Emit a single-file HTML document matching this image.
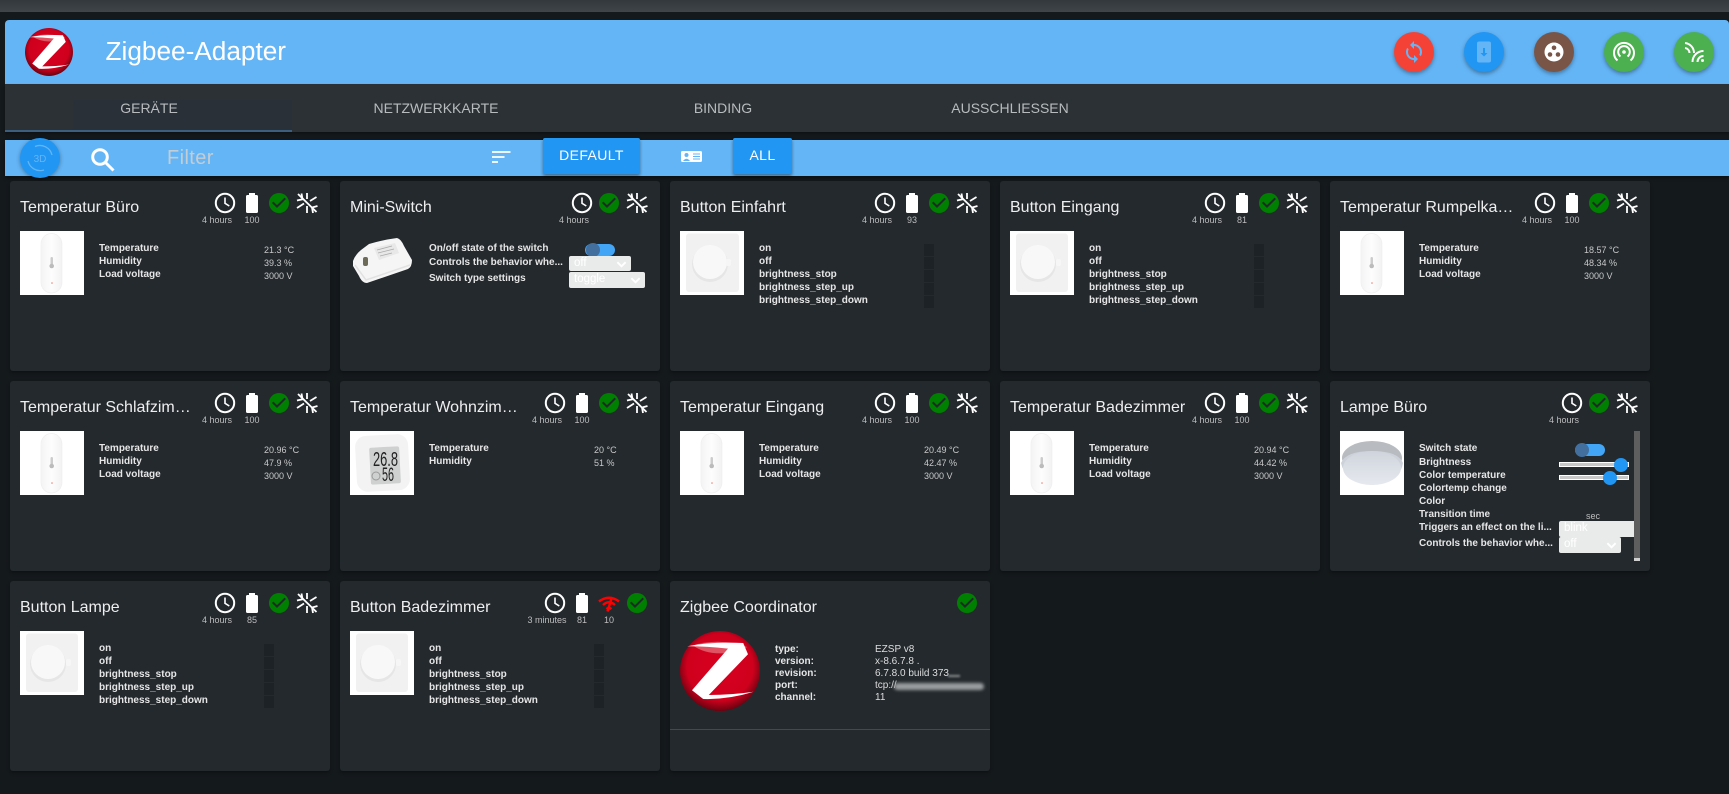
<!DOCTYPE html>
<html lang="de"><head><meta charset="utf-8"><title>Zigbee-Adapter</title>
<style>
html,body{margin:0;padding:0;width:1729px;height:794px;overflow:hidden;background:#14191c;font-family:"Liberation Sans",sans-serif;color:#fff}
*{box-sizing:border-box}
.a{position:absolute}
#top{position:absolute;left:0;top:0;width:1729px;height:12px;background:linear-gradient(#33383c,#40454a)}
#hdr{position:absolute;left:5px;top:20px;width:1724px;height:64px;background:#64b5f6;border-radius:4px 4px 0 0}
#ttl{position:absolute;left:105.5px;top:36px;font-size:26.2px;line-height:30px;color:#fff;white-space:nowrap}
#tabs{position:absolute;left:5px;top:84px;width:1724px;height:48px;background:#2b3135;box-shadow:0 2px 3px rgba(0,0,0,.3)}
.tab{position:absolute;top:100px;font-size:14px;line-height:16px;color:#b8bcbe;transform:translateX(-50%);white-space:nowrap}
#tb{position:absolute;left:5px;top:140px;width:1724px;height:36px;background:#64b5f6;box-shadow:0 2px 3px rgba(0,0,0,.4)}
.rb{position:absolute;top:32px;width:40px;height:40px;border-radius:50%;box-shadow:0 2px 4px rgba(0,0,0,.35)}
.rb svg{position:absolute;left:8px;top:8px;width:24px;height:24px}
.btn{position:absolute;top:138px;height:36px;background:#2196f3;border-radius:2px;font-size:14px;letter-spacing:.4px;line-height:35px;text-align:center;color:#fff;box-shadow:0 2px 3px rgba(0,0,0,.4)}
.c{position:absolute;width:320px;height:190px;background:#23292d;border-radius:3px;box-shadow:0 2px 3px rgba(0,0,0,.3)}
.t{position:absolute;left:10px;top:17px;font-size:16px;line-height:20px;color:#eee;white-space:nowrap}
.im{position:absolute;left:10px;top:50px;width:64px;height:64px}
.l{position:absolute;left:89px;margin-top:1px;font-size:10px;font-weight:bold;line-height:13px;color:#e6e6e6;white-space:nowrap}
.v{position:absolute;left:254px;font-size:9px;line-height:13px;color:#c8c8c8;white-space:nowrap}
.s{position:absolute;font-size:9px;line-height:11px;color:#bdbdbd;transform:translateX(-50%);top:34px;white-space:nowrap}
.ic{position:absolute;top:10px;width:24px;height:24px}
.ck{left:257px}.sn{left:285px}.bt{left:230px}.cl{left:202.7px}.cl2{left:230px}
.d{position:absolute;left:254px;width:10px;height:12px;background:#1c2225}
.sel{position:absolute;background:#e9ebea;border-radius:2px;font-size:11.5px;color:#fff;padding-left:5px;line-height:15px}
.sel svg{position:absolute;top:3px;width:11px;height:11px}
.tr{position:absolute;width:30px;height:12px;border-radius:6px;background:#42a5f5}
.th{position:absolute;left:0;top:-1px;width:14px;height:14px;border-radius:50%;background:#436f9e}
.cv{position:absolute;left:205px;font-size:10px;line-height:12px;color:#ddd;white-space:nowrap}
.cl3{left:105px;line-height:12px}
</style></head><body>
<svg width="0" height="0" style="position:absolute">
<defs>
<radialGradient id="rg" cx="50%" cy="45%" r="55%"><stop offset="0" stop-color="#d8001f"/><stop offset=".75" stop-color="#cf001d"/><stop offset="1" stop-color="#6b0210"/></radialGradient>
<linearGradient id="pl" x1="0" x2="1"><stop offset="0" stop-color="#f4f4f4"/><stop offset=".5" stop-color="#fdfdfd"/><stop offset="1" stop-color="#f2f2f2"/></linearGradient>
<linearGradient id="lg" x1="0" x2="0" y1="0" y2="1"><stop offset="0" stop-color="#cfd4dc"/><stop offset="1" stop-color="#e6e9ef"/></linearGradient>
<symbol id="zb" viewBox="0 0 100 100"><circle cx="50" cy="50" r="50" fill="url(#rg)"/><path d="M16 18Q50 8 84 20Q70 28 50 28Q30 28 16 18Z" fill="#e88a90" opacity=".6"/><path d="M9 19Q40 13 79 15L85 29L36 80Q65 80 92 76Q60 86 29 85L15 74L60 22Q35 19 9 19Z" fill="#fff"/></symbol>
<symbol id="clk" viewBox="0 0 24 24"><circle cx="12" cy="12" r="9.200" fill="none" stroke="#fff" stroke-width="2"/><path d="M12 6.500V12.300L16.300 15" fill="none" stroke="#fff" stroke-width="1.600"/></symbol>
<symbol id="bat" viewBox="0 0 24 24"><path fill="#fff" d="M16.67 4H15V2H9v2H7.33C6.6 4 6 4.6 6 5.33v15.33C6 21.4 6.6 22 7.33 22h9.33c.74 0 1.34-.6 1.34-1.33V5.33C18 4.6 17.4 4 16.67 4z"/></symbol>
<symbol id="chk" viewBox="0 0 24 24"><circle cx="12" cy="12" r="10" fill="#008000"/><path fill="#1f2a28" d="M10 17l-5-5 1.41-1.41L10 14.17l7.59-7.59L19 8z"/></symbol>
<symbol id="sno" viewBox="0 0 24 24"><g fill="none" stroke="#fff" stroke-width="1.800"><path d="M3 3L21.500 21"/><path d="M2 9.500L7.500 8.300L6.500 2.500"/><path d="M12 2V8"/><path d="M15 10L21.500 6"/><path d="M22.500 15L17 16.500L18 22"/><path d="M2 17L9 12.500"/><path d="M12 15V22"/></g></symbol>
<symbol id="sen" viewBox="0 0 64 64"><rect width="64" height="64" fill="#fff"/><rect x="21" y="2.500" width="21" height="59.500" rx="10.500" fill="url(#pl)" stroke="#efefef" stroke-width=".7"/><rect x="30.500" y="26" width="2.500" height="8" rx="1.200" fill="#ccc"/><circle cx="31.700" cy="35" r="2.300" fill="#bbb"/><circle cx="32" cy="52" r=".8" fill="#f08070"/></symbol>
<symbol id="btn1" viewBox="0 0 64 64"><rect width="64" height="64" fill="#fff"/><rect x="6" y="2.500" width="53" height="58.500" rx="3" fill="#f1f1f1"/><circle cx="30" cy="33" r="18" fill="#e6e6e6"/><circle cx="30" cy="31" r="17" fill="#f8f8f8"/><rect x="46" y="28" width="5" height="7" rx="2" fill="#f6f6f6"/></symbol>
<symbol id="btn2" viewBox="0 0 64 64"><rect width="64" height="64" fill="#fff"/><rect x="6" y="2.500" width="52" height="58.500" rx="3" fill="#f1f1f1"/><circle cx="28" cy="33" r="18" fill="#e6e6e6"/><circle cx="28" cy="31" r="17" fill="#f8f8f8"/><rect x="46" y="28" width="5" height="7" rx="2" fill="#f6f6f6"/></symbol>
<symbol id="lmp" viewBox="0 0 64 64"><rect width="64" height="64" fill="#fff"/><ellipse cx="32" cy="27" rx="30" ry="17" fill="#b8bbbf"/><path d="M1 32Q5 51 32 54Q60 51 63 32Q58 20 32 20Q6 20 1 32Z" fill="#cdd2da"/><ellipse cx="32" cy="37" rx="29" ry="17" fill="url(#lg)"/></symbol>
<symbol id="chv" viewBox="0 0 12 12"><path d="M1.500 3.500L6 8L10.500 3.500" fill="none" stroke="#fff" stroke-width="2"/></symbol>
</defs></svg>

<div id="top"></div>
<div id="hdr"></div>
<svg class="a" style="left:25px;top:28px" width="48" height="48"><use href="#zb"/></svg>
<div id="ttl">Zigbee-Adapter</div>
<div class="rb" style="left:1394px;background:#f44336"><svg viewBox="0 0 24 24"><path fill="#64b5f6" d="M12 4V1L8 5l4 4V6c3.31 0 6 2.69 6 6 0 1.01-.25 1.97-.7 2.8l1.46 1.46C19.54 15.03 20 13.57 20 12c0-4.42-3.58-8-8-8zm0 14c-3.31 0-6-2.69-6-6 0-1.01.25-1.97.7-2.8L5.24 7.74C4.46 8.97 4 10.43 4 12c0 4.42 3.58 8 8 8v3l4-4-4-4v3z"/></svg></div>
<div class="rb" style="left:1464px;background:#2196f3"><svg viewBox="0 0 24 24"><rect x="5" y="1.500" width="14" height="21" rx="2" fill="#64b5f6"/><path fill="#2196f3" d="M11 8h2v5h2.500L12 16.500 8.500 13H11z"/></svg></div>
<div class="rb" style="left:1534px;background:#795548"><svg viewBox="0 0 24 24"><circle cx="12" cy="12" r="9.500" fill="#fff"/><circle cx="12" cy="7.800" r="2.300" fill="#795548"/><circle cx="8" cy="14.500" r="2.300" fill="#795548"/><circle cx="16" cy="14.500" r="2.300" fill="#795548"/></svg></div>
<div class="rb" style="left:1604px;background:#4caf50"><svg viewBox="0 0 24 24"><g fill="none" stroke="#fff" stroke-width="2"><path d="M5.500 20.500A10 10 0 1 1 18.500 20.500"/><path d="M8.500 16.500A5.800 5.800 0 1 1 15.500 16.500"/></g><circle cx="12" cy="12" r="1.800" fill="#fff"/></svg></div>
<div class="rb" style="left:1674px;background:#4caf50"><svg viewBox="0 0 24 24"><g fill="none" stroke="#fff" stroke-width="2"><path d="M3 3A10 10 0 0 1 12 13"/><path d="M3 8A5 5 0 0 1 7.500 13"/><path d="M10.500 22A11 11 0 0 1 21.500 11"/><path d="M15.500 22A6 6 0 0 1 21.500 16"/></g><circle cx="20.500" cy="20.500" r="1.500" fill="#fff"/></svg></div>

<div id="tabs"></div>
<div class="a" style="left:73px;top:100px;width:219px;height:30px;background:#2a3038"></div>
<div class="a" style="left:5px;top:130px;width:287px;height:2px;background:#3c5f80"></div>
<div class="tab" style="left:149px">GERÄTE</div>
<div class="tab" style="left:436px">NETZWERKKARTE</div>
<div class="tab" style="left:723px">BINDING</div>
<div class="tab" style="left:1010px">AUSSCHLIESSEN</div>

<div id="tb"></div>
<svg class="a" style="left:20px;top:138px;filter:drop-shadow(0 1px 2px rgba(0,0,0,.35))" width="40" height="40" viewBox="0 0 40 40"><circle cx="20" cy="20" r="20" fill="#2196f3"/><g fill="none" stroke="#64b5f6" stroke-width="1.300"><path d="M15 8.500A12.500 12.500 0 0 1 32 17"/><path d="M8 23A12.500 12.500 0 0 0 24 32"/></g><text x="20" y="24" font-size="10" fill="#64b5f6" text-anchor="middle" font-family="Liberation Sans">3D</text></svg>
<svg class="a" style="left:90px;top:147px" width="26" height="26" viewBox="0 0 26 26"><circle cx="10" cy="10" r="7.300" fill="none" stroke="#fff" stroke-width="3"/><path d="M15.500 15.500L23.500 23.500" stroke="#fff" stroke-width="3"/></svg>
<div class="a" style="left:167px;top:146px;font-size:20px;letter-spacing:.4px;line-height:24px;color:#c4ccd4">Filter</div>
<svg class="a" style="left:492px;top:150px" width="19" height="14"><path d="M0 2H18.500M0 7H12.500M0 12H6" stroke="#fff" stroke-width="1.800"/></svg>
<div class="btn" style="left:543px;width:97px">DEFAULT</div>
<svg class="a" style="left:681px;top:151px" width="21" height="11" viewBox="0 0 21 11"><rect width="21" height="11" rx="1.500" fill="#fff"/><circle cx="5.500" cy="4" r="2" fill="#64b5f6"/><path d="M2 10Q5.500 5.500 9 10" fill="#64b5f6"/><path d="M12 3H19M12 5.500H19M12 8H19" stroke="#64b5f6"/></svg>
<div class="btn" style="left:733px;width:59px">ALL</div>

<!-- Row 1 -->
<div class="c" style="left:10px;top:181px"><div class="t">Temperatur Büro</div>
<svg class="ic cl"><use href="#clk"/></svg><div class="s" style="left:207px">4 hours</div><svg class="ic bt"><use href="#bat"/></svg><div class="s" style="left:242px">100</div><svg class="ic ck"><use href="#chk"/></svg><svg class="ic sn"><use href="#sno"/></svg>
<svg class="im"><use href="#sen"/></svg>
<div class="l" style="top:60px">Temperature</div><div class="l" style="top:73px">Humidity</div><div class="l" style="top:86px">Load voltage</div>
<div class="v" style="top:63px">21.3 °C</div><div class="v" style="top:76px">39.3 %</div><div class="v" style="top:89px">3000 V</div></div>

<div class="c" style="left:340px;top:181px"><div class="t">Mini-Switch</div>
<svg class="ic cl2"><use href="#clk"/></svg><div class="s" style="left:234px">4 hours</div><svg class="ic ck"><use href="#chk"/></svg><svg class="ic sn"><use href="#sno"/></svg>
<svg class="a" style="left:12px;top:57px" width="60" height="45" viewBox="0 0 60 45"><path d="M1 23Q3 17 9 12L17 6Q30 2 45 0Q49 1 52 8L60 22Q60 29 56 31L15 45Q10 45 7 38L1 28Z" fill="#f5f5f5"/><path d="M3 27L14 42L58 27" fill="none" stroke="#e2e2e2" stroke-width="1.500"/><path d="M22 10L43 5L47 15L27 22Z" fill="#e8e8e8"/><path d="M25 12L40 8M26 15L42 11M28 18L40 15" stroke="#aaa" stroke-width=".8"/><rect x="11" y="19" width="5" height="9" rx="2" fill="#6d6b58"/></svg>
<div class="l" style="top:60px">On/off state of the switch</div><div class="l" style="top:74px">Controls the behavior whe...</div><div class="l" style="top:90px">Switch type settings</div>
<div class="tr" style="left:245px;top:63px"><div class="th" style="left:1px"></div></div>
<div class="sel" style="left:229px;top:75px;width:62px;height:15px">off<svg style="left:47px"><use href="#chv"/></svg></div>
<div class="sel" style="left:229px;top:91px;width:76px;height:16px">toggle<svg style="left:61px"><use href="#chv"/></svg></div></div>

<div class="c" style="left:670px;top:181px"><div class="t">Button Einfahrt</div>
<svg class="ic cl"><use href="#clk"/></svg><div class="s" style="left:207px">4 hours</div><svg class="ic bt"><use href="#bat"/></svg><div class="s" style="left:242px">93</div><svg class="ic ck"><use href="#chk"/></svg><svg class="ic sn"><use href="#sno"/></svg>
<svg class="im"><use href="#btn1"/></svg>
<div class="l" style="top:60px">on</div><div class="l" style="top:73px">off</div><div class="l" style="top:86px">brightness_stop</div><div class="l" style="top:99px">brightness_step_up</div><div class="l" style="top:112px">brightness_step_down</div>
<div class="d" style="top:63px"></div><div class="d" style="top:76px"></div><div class="d" style="top:89px"></div><div class="d" style="top:102px"></div><div class="d" style="top:115px"></div></div>

<div class="c" style="left:1000px;top:181px"><div class="t">Button Eingang</div>
<svg class="ic cl"><use href="#clk"/></svg><div class="s" style="left:207px">4 hours</div><svg class="ic bt"><use href="#bat"/></svg><div class="s" style="left:242px">81</div><svg class="ic ck"><use href="#chk"/></svg><svg class="ic sn"><use href="#sno"/></svg>
<svg class="im"><use href="#btn2"/></svg>
<div class="l" style="top:60px">on</div><div class="l" style="top:73px">off</div><div class="l" style="top:86px">brightness_stop</div><div class="l" style="top:99px">brightness_step_up</div><div class="l" style="top:112px">brightness_step_down</div>
<div class="d" style="top:63px"></div><div class="d" style="top:76px"></div><div class="d" style="top:89px"></div><div class="d" style="top:102px"></div><div class="d" style="top:115px"></div></div>

<div class="c" style="left:1330px;top:181px"><div class="t">Temperatur Rumpelka…</div>
<svg class="ic cl"><use href="#clk"/></svg><div class="s" style="left:207px">4 hours</div><svg class="ic bt"><use href="#bat"/></svg><div class="s" style="left:242px">100</div><svg class="ic ck"><use href="#chk"/></svg><svg class="ic sn"><use href="#sno"/></svg>
<svg class="im"><use href="#sen"/></svg>
<div class="l" style="top:60px">Temperature</div><div class="l" style="top:73px">Humidity</div><div class="l" style="top:86px">Load voltage</div>
<div class="v" style="top:63px">18.57 °C</div><div class="v" style="top:76px">48.34 %</div><div class="v" style="top:89px">3000 V</div></div>

<!-- Row 2 -->
<div class="c" style="left:10px;top:381px"><div class="t">Temperatur Schlafzim…</div>
<svg class="ic cl"><use href="#clk"/></svg><div class="s" style="left:207px">4 hours</div><svg class="ic bt"><use href="#bat"/></svg><div class="s" style="left:242px">100</div><svg class="ic ck"><use href="#chk"/></svg><svg class="ic sn"><use href="#sno"/></svg>
<svg class="im"><use href="#sen"/></svg>
<div class="l" style="top:60px">Temperature</div><div class="l" style="top:73px">Humidity</div><div class="l" style="top:86px">Load voltage</div>
<div class="v" style="top:63px">20.96 °C</div><div class="v" style="top:76px">47.9 %</div><div class="v" style="top:89px">3000 V</div></div>

<div class="c" style="left:340px;top:381px"><div class="t">Temperatur Wohnzim…</div>
<svg class="ic cl"><use href="#clk"/></svg><div class="s" style="left:207px">4 hours</div><svg class="ic bt"><use href="#bat"/></svg><div class="s" style="left:242px">100</div><svg class="ic ck"><use href="#chk"/></svg><svg class="ic sn"><use href="#sno"/></svg>
<svg class="im" viewBox="0 0 64 64"><rect width="64" height="64" fill="#fff"/><rect x="6" y="4" width="53" height="56" rx="11" fill="#f3f3f3" transform="rotate(-3 32 32)"/><rect x="20" y="16" width="30" height="37" rx="2" fill="#cfd1d0" transform="rotate(-3 35 34)"/><text x="23" y="35" font-size="20" fill="#222" font-family="Liberation Sans" textLength="25" lengthAdjust="spacingAndGlyphs">26.8</text><text x="32" y="50" font-size="19" fill="#222" font-family="Liberation Sans" textLength="12" lengthAdjust="spacingAndGlyphs">56</text><circle cx="26" cy="45" r="4" fill="none" stroke="#999"/></svg>
<div class="l" style="top:60px">Temperature</div><div class="l" style="top:73px">Humidity</div>
<div class="v" style="top:63px">20 °C</div><div class="v" style="top:76px">51 %</div></div>

<div class="c" style="left:670px;top:381px"><div class="t">Temperatur Eingang</div>
<svg class="ic cl"><use href="#clk"/></svg><div class="s" style="left:207px">4 hours</div><svg class="ic bt"><use href="#bat"/></svg><div class="s" style="left:242px">100</div><svg class="ic ck"><use href="#chk"/></svg><svg class="ic sn"><use href="#sno"/></svg>
<svg class="im"><use href="#sen"/></svg>
<div class="l" style="top:60px">Temperature</div><div class="l" style="top:73px">Humidity</div><div class="l" style="top:86px">Load voltage</div>
<div class="v" style="top:63px">20.49 °C</div><div class="v" style="top:76px">42.47 %</div><div class="v" style="top:89px">3000 V</div></div>

<div class="c" style="left:1000px;top:381px"><div class="t">Temperatur Badezimmer</div>
<svg class="ic cl"><use href="#clk"/></svg><div class="s" style="left:207px">4 hours</div><svg class="ic bt"><use href="#bat"/></svg><div class="s" style="left:242px">100</div><svg class="ic ck"><use href="#chk"/></svg><svg class="ic sn"><use href="#sno"/></svg>
<svg class="im"><use href="#sen"/></svg>
<div class="l" style="top:60px">Temperature</div><div class="l" style="top:73px">Humidity</div><div class="l" style="top:86px">Load voltage</div>
<div class="v" style="top:63px">20.94 °C</div><div class="v" style="top:76px">44.42 %</div><div class="v" style="top:89px">3000 V</div></div>

<div class="c" style="left:1330px;top:381px"><div class="t">Lampe Büro</div>
<svg class="ic cl2"><use href="#clk"/></svg><div class="s" style="left:234px">4 hours</div><svg class="ic ck"><use href="#chk"/></svg><svg class="ic sn"><use href="#sno"/></svg>
<svg class="im"><use href="#lmp"/></svg>
<div class="l" style="top:60px">Switch state</div><div class="l" style="top:74px">Brightness</div><div class="l" style="top:87px">Color temperature</div><div class="l" style="top:100px">Colortemp change</div><div class="l" style="top:113px">Color</div><div class="l" style="top:126px">Transition time</div><div class="l" style="top:139px">Triggers an effect on the li...</div><div class="l" style="top:155px">Controls the behavior whe...</div>
<div class="tr" style="left:245px;top:63px"><div class="th" style="left:0"></div></div>
<div class="a" style="left:229px;top:81px;width:70px;height:5px;background:#c8c8c8;border:1px solid #fff"></div><div class="a" style="left:284px;top:77px;width:14px;height:14px;border-radius:50%;background:#2196f3"></div>
<div class="a" style="left:229px;top:94px;width:70px;height:5px;background:#c8c8c8;border:1px solid #fff"></div><div class="a" style="left:273px;top:90px;width:14px;height:14px;border-radius:50%;background:#2196f3"></div>
<div class="s" style="left:263px;top:130px">sec</div>
<div class="sel" style="left:229px;top:140px;width:75px;height:16px;border-radius:2px 0 0 2px">blink</div>
<div class="sel" style="left:229px;top:156px;width:62px;height:16px">off<svg style="left:47px"><use href="#chv"/></svg></div>
<div class="a" style="left:304px;top:50px;width:6px;height:130px;background:#5e5e5e"></div><div class="a" style="left:304px;top:177px;width:6px;height:3px;background:#d0d0d0"></div></div>

<!-- Row 3 -->
<div class="c" style="left:10px;top:581px"><div class="t">Button Lampe</div>
<svg class="ic cl"><use href="#clk"/></svg><div class="s" style="left:207px">4 hours</div><svg class="ic bt"><use href="#bat"/></svg><div class="s" style="left:242px">85</div><svg class="ic ck"><use href="#chk"/></svg><svg class="ic sn"><use href="#sno"/></svg>
<svg class="im"><use href="#btn2"/></svg>
<div class="l" style="top:60px">on</div><div class="l" style="top:73px">off</div><div class="l" style="top:86px">brightness_stop</div><div class="l" style="top:99px">brightness_step_up</div><div class="l" style="top:112px">brightness_step_down</div>
<div class="d" style="top:63px"></div><div class="d" style="top:76px"></div><div class="d" style="top:89px"></div><div class="d" style="top:102px"></div><div class="d" style="top:115px"></div></div>

<div class="c" style="left:340px;top:581px"><div class="t">Button Badezimmer</div>
<svg class="ic cl"><use href="#clk"/></svg><div class="s" style="left:207px">3 minutes</div><svg class="ic bt"><use href="#bat"/></svg><div class="s" style="left:242px">81</div>
<svg class="a" style="left:258px;top:14px" width="22" height="17" viewBox="0 0 22 17"><g fill="none" stroke="#f00" stroke-width="2.500"><path d="M1 6.500Q11 -1 21 6.500"/><path d="M5 10Q11 4.500 17 10"/><path d="M8.500 14Q11 12 13.500 14"/><path d="M14 2L9.500 16.500"/></g></svg>
<div class="s" style="left:269px">10</div><svg class="ic" style="left:284.700px"><use href="#chk"/></svg>
<svg class="im"><use href="#btn2"/></svg>
<div class="l" style="top:60px">on</div><div class="l" style="top:73px">off</div><div class="l" style="top:86px">brightness_stop</div><div class="l" style="top:99px">brightness_step_up</div><div class="l" style="top:112px">brightness_step_down</div>
<div class="d" style="top:63px"></div><div class="d" style="top:76px"></div><div class="d" style="top:89px"></div><div class="d" style="top:102px"></div><div class="d" style="top:115px"></div></div>

<div class="c" style="left:670px;top:581px"><div class="t">Zigbee Coordinator</div>
<svg class="ic" style="left:284.700px"><use href="#chk"/></svg>
<svg class="a" style="left:10px;top:50px" width="80" height="80"><use href="#zb"/></svg>
<div class="l cl3" style="top:62px">type:</div><div class="l cl3" style="top:74px">version:</div><div class="l cl3" style="top:86px">revision:</div><div class="l cl3" style="top:98px">port:</div><div class="l cl3" style="top:110px">channel:</div>
<div class="cv" style="top:63px">EZSP v8</div><div class="cv" style="top:75px">x-8.6.7.8 .</div><div class="cv" style="top:87px">6.7.8.0 build 373</div><div class="cv" style="top:99px">tcp://</div><div class="cv" style="top:111px">11</div>
<div class="a" style="left:224px;top:102px;width:90px;height:7px;background:#9a9ea0;border-radius:4px;filter:blur(1.500px)"></div>
<div class="a" style="left:278px;top:94px;width:12px;height:2px;background:#8b8f91;filter:blur(1px)"></div>
<div class="a" style="left:0;top:148px;width:320px;height:1px;background:#43494d"></div></div>
</body></html>
